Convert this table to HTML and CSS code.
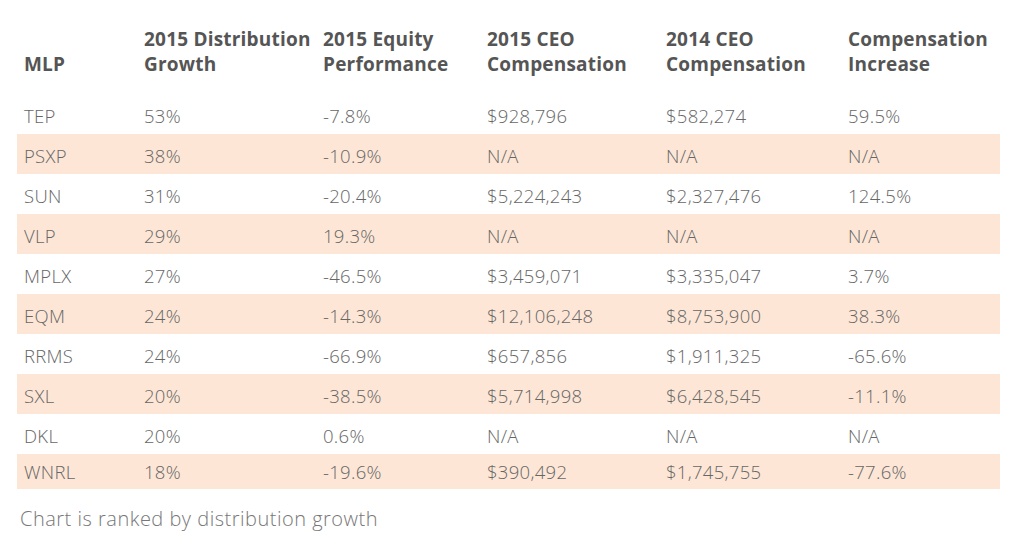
FILE: index.html
```html
<!DOCTYPE html>
<html lang="en">
<head>
<meta charset="utf-8">
<title>MLP distribution growth and CEO compensation</title>
<link rel="stylesheet" href="styles.css">
</head>
<body>
<main class="chart">
  <div class="row head">
    <div class="cell">MLP</div>
    <div class="cell">2015 Distribution Growth</div>
    <div class="cell">2015 Equity Performance</div>
    <div class="cell">2015 CEO Compensation</div>
    <div class="cell">2014 CEO Compensation</div>
    <div class="cell">Compensation Increase</div>
  </div>
  <div class="row"><div class="cell">TEP</div><div class="cell">53%</div><div class="cell">-7.8%</div><div class="cell">$928,796</div><div class="cell">$582,274</div><div class="cell">59.5%</div></div>
  <div class="row shade"><div class="cell">PSXP</div><div class="cell">38%</div><div class="cell">-10.9%</div><div class="cell">N/A</div><div class="cell">N/A</div><div class="cell">N/A</div></div>
  <div class="row"><div class="cell">SUN</div><div class="cell">31%</div><div class="cell">-20.4%</div><div class="cell">$5,224,243</div><div class="cell">$2,327,476</div><div class="cell">124.5%</div></div>
  <div class="row shade"><div class="cell">VLP</div><div class="cell">29%</div><div class="cell">19.3%</div><div class="cell">N/A</div><div class="cell">N/A</div><div class="cell">N/A</div></div>
  <div class="row"><div class="cell">MPLX</div><div class="cell">27%</div><div class="cell">-46.5%</div><div class="cell">$3,459,071</div><div class="cell">$3,335,047</div><div class="cell">3.7%</div></div>
  <div class="row shade"><div class="cell">EQM</div><div class="cell">24%</div><div class="cell">-14.3%</div><div class="cell">$12,106,248</div><div class="cell">$8,753,900</div><div class="cell">38.3%</div></div>
  <div class="row"><div class="cell">RRMS</div><div class="cell">24%</div><div class="cell">-66.9%</div><div class="cell">$657,856</div><div class="cell">$1,911,325</div><div class="cell">-65.6%</div></div>
  <div class="row shade"><div class="cell">SXL</div><div class="cell">20%</div><div class="cell">-38.5%</div><div class="cell">$5,714,998</div><div class="cell">$6,428,545</div><div class="cell">-11.1%</div></div>
  <div class="row"><div class="cell">DKL</div><div class="cell">20%</div><div class="cell">0.6%</div><div class="cell">N/A</div><div class="cell">N/A</div><div class="cell">N/A</div></div>
  <div class="row shade last"><div class="cell">WNRL</div><div class="cell">18%</div><div class="cell">-19.6%</div><div class="cell">$390,492</div><div class="cell">$1,745,755</div><div class="cell">-77.6%</div></div>
  <p class="note">Chart is ranked by distribution growth</p>
</main>
</body>
</html>
```
FILE: styles.css
```css
html, body {
  margin: 0;
  padding: 0;
  background: #ffffff;
}

body {
  font-family: "Open Sans", "Liberation Sans", sans-serif;
  color: #666666;
}

.chart {
  width: 983px;
  margin: 0 0 0 17px;
  padding-top: 27px;
}

.row {
  display: grid;
  grid-template-columns: 120px 179px 164px 179px 182px 1fr;
  height: 40px;
  align-items: center;
  font-size: 18.5px;
  font-weight: 300;
  letter-spacing: 0.3px;
}

.row .cell {
  padding-left: 7px;
  padding-top: 3px;
  white-space: nowrap;
}

.row.last {
  height: 35px;
  align-items: start;
}

.row.last .cell {
  padding-top: 5px;
}

.row.head {
  height: 67px;
  align-items: start;
  font-size: 19px;
  font-weight: 700;
  letter-spacing: 0.2px;
  color: #555555;
  line-height: 25px;
}

.row.head .cell {
  white-space: normal;
  padding-top: 0;
  padding-right: 4px;
}

.row.head .cell:first-child {
  padding-top: 25px;
}

.shade {
  background: #fde6d6;
}

.note {
  margin: 16px 0 0 3px;
  font-size: 20px;
  font-weight: 300;
  letter-spacing: 0.5px;
  color: #777777;
}
```
